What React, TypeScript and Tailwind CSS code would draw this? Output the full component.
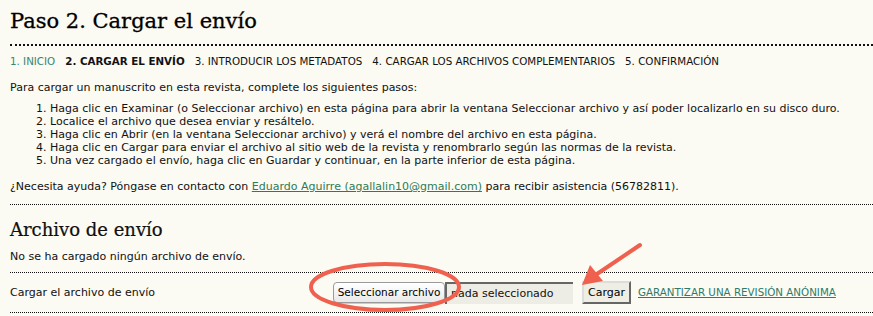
export default function App() {
  const steps = [
    "3. INTRODUCIR LOS METADATOS",
    "4. CARGAR LOS ARCHIVOS COMPLEMENTARIOS",
    "5. CONFIRMACIÓN",
  ];
  const items = [
    "Haga clic en Examinar (o Seleccionar archivo) en esta página para abrir la ventana Seleccionar archivo y así poder localizarlo en su disco duro.",
    "Localice el archivo que desea enviar y resáltelo.",
    "Haga clic en Abrir (en la ventana Seleccionar archivo) y verá el nombre del archivo en esta página.",
    "Haga clic en Cargar para enviar el archivo al sitio web de la revista y renombrarlo según las normas de la revista.",
    "Una vez cargado el envío, haga clic en Guardar y continuar, en la parte inferior de esta página.",
  ];

  return (
    <div className="relative h-[316px] w-[873px] overflow-hidden bg-[#fbfaf3] pl-[10px] font-['DejaVu_Sans',Verdana,sans-serif] text-[11px] leading-[13px] text-[#111]">
      <h2 className="pt-[7px] pb-[9px] font-['DejaVu_Serif',Georgia,serif] text-[21px] leading-[28px] text-black [-webkit-text-stroke:0.3px_black]">
        Paso 2. Cargar el envío
      </h2>
      <div className="border-b-2 border-dotted border-[#111]" />

      <div className="mt-[9px] flex gap-[10px] text-[10.3px] leading-[13px]">
        <a className="text-[#3a8571]">1. INICIO</a>
        <span className="font-bold">2. CARGAR EL ENVÍO</span>
        {steps.map((s) => (
          <span key={s}>{s}</span>
        ))}
      </div>

      <p className="mt-[13px]">Para cargar un manuscrito en esta revista, complete los siguientes pasos:</p>

      <ol className="mt-[8px] list-decimal pl-[40px]">
        {items.map((t) => (
          <li key={t}>{t}</li>
        ))}
      </ol>

      <p className="mt-[13px]">
        ¿Necesita ayuda? Póngase en contacto con{" "}
        <a className="text-[#2f7a55] underline">Eduardo Aguirre (agallalin10@gmail.com)</a> para recibir
        asistencia (56782811).
      </p>

      <div className="mt-[11px] border-b border-dotted border-[#111]" />

      <h3 className="mt-[14px] font-['DejaVu_Serif',Georgia,serif] text-[18px] leading-[22px] [-webkit-text-stroke:0.2px_black]">
        Archivo de envío
      </h3>
      <p className="mt-[9px]">No se ha cargado ningún archivo de envío.</p>

      <div className="mt-[9px] flex h-[41px] items-center border-y border-dotted border-[#111]">
        <div className="w-[323px]">Cargar el archivo de envío</div>
        <div className="flex items-center">
          <button className="h-[21px] w-[112px] rounded-[4px] border border-[#9a9a9a] bg-gradient-to-b from-white to-[#e9e9e9] text-[10.5px] text-black shadow-[0_1px_0_#ccc]">
            Seleccionar archivo
          </button>
          <div className="flex h-[22px] w-[128px] items-center border-t-2 border-l-2 border-[#666] bg-[#ededE5] pl-[4px]">
            nada seleccionado
          </div>
          <button className="ml-[9px] h-[23px] w-[49px] border-2 border-t-[#ddd] border-l-[#ddd] border-r-[#666] border-b-[#666] bg-[#efeee4] text-[11px] text-black">
            Cargar
          </button>
          <a className="ml-[7px] text-[10.3px] text-[#2f7a6a] underline">GARANTIZAR UNA REVISIÓN ANÓNIMA</a>
        </div>
      </div>

      <svg className="pointer-events-none absolute left-0 top-0" width="873" height="316">
        <ellipse cx="385" cy="287" rx="74" ry="23" fill="none" stroke="#f0604e" strokeWidth="4" />
        <line x1="640" y1="245" x2="594" y2="276" stroke="#f0604e" strokeWidth="4" strokeLinecap="round" />
        <polygon points="582,285 590,265 603,281" fill="#f0604e" />
      </svg>
    </div>
  );
}
